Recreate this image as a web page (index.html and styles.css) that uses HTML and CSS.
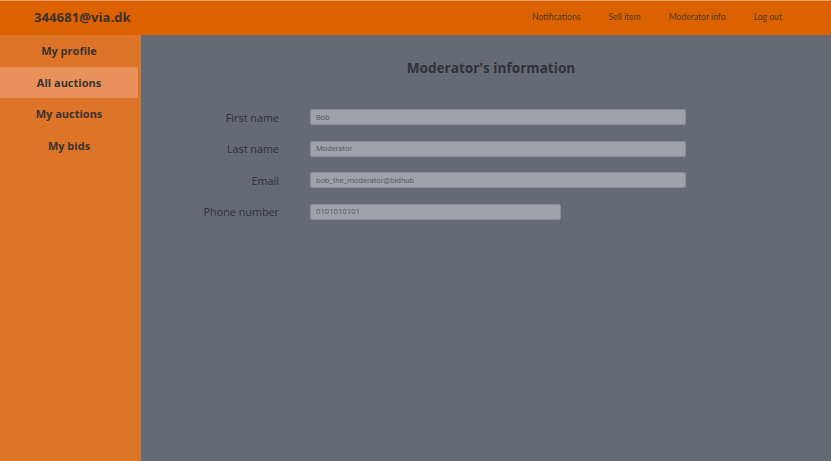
FILE: index.html
```html
<!DOCTYPE html>
<html>
<head>
<meta charset="utf-8">
<link rel="stylesheet" href="styles.css">
</head>
<body>
<header class="topbar">
  <div class="brand">344681@via.dk</div>
  <nav class="topnav">
    <a>Notifications</a>
    <a>Sell item</a>
    <a>Moderator info</a>
    <a>Log out</a>
  </nav>
</header>
<div class="layout">
  <aside class="sidebar">
    <a class="side-item">My profile</a>
    <a class="side-item active">All auctions</a>
    <a class="side-item">My auctions</a>
    <a class="side-item">My bids</a>
  </aside>
  <main class="content">
    <h1 class="title">Moderator's information</h1>
    <div class="form">
      <label>First name</label>
      <div class="field wide">Bob</div>
      <label>Last name</label>
      <div class="field wide">Moderator</div>
      <label>Email</label>
      <div class="field wide">bob_the_moderator@bidhub</div>
      <label>Phone number</label>
      <div class="field narrow">0101010101</div>
    </div>
  </main>
</div>
</body>
</html>
```
FILE: styles.css
```css
* { box-sizing: border-box; }
html, body { margin: 0; padding: 0; height: 100%; }
body {
  font-family: "Open Sans", "Noto Sans", sans-serif;
  background: #666a74;
  display: flex;
  flex-direction: column;
  overflow: hidden;
}
.topbar {
  height: 35px;
  background: #dc6200;
  border-top: 1px solid #e9a070;
  padding-bottom: 2px;
  display: flex;
  align-items: center;
  justify-content: space-between;
  flex-shrink: 0;
}
.brand {
  padding-left: 34px;
  font-size: 13px;
  font-weight: 700;
  color: #3a3230;
  letter-spacing: 0.1px;
}
.topnav {
  display: flex;
  padding-right: 49px;
  font-family: Lato, "Open Sans", sans-serif;
  font-size: 8.6px;
  color: #4e3a2c;
}
.topnav a { margin-left: 28px; }
.layout {
  flex: 1;
  display: flex;
}
.sidebar {
  width: 141px;
  background: #de7428;
  display: flex;
  flex-direction: column;
}
.side-item {
  height: 31.5px;
  margin-right: 3px;
  display: flex;
  align-items: center;
  justify-content: center;
  font-size: 11px;
  font-weight: 700;
  color: #3b3330;
  border-radius: 0 2px 2px 0;
}
.side-item.active { background: #e8915a; }
.content {
  flex: 1;
}
.title {
  margin: 23px 0 0 0;
  text-align: center;
  padding-left: 10px;
  font-size: 13.6px;
  font-weight: 700;
  color: #2f3137;
  line-height: 20px;
}
.form {
  margin-top: 31px;
  display: grid;
  grid-template-columns: 138px 376px;
  column-gap: 31px;
  row-gap: 15.5px;
  align-items: center;
}
.form label {
  text-align: right;
  font-size: 10.8px;
  color: #2f3138;
}
.field {
  height: 16px;
  background: #9ea2a8;
  border: 1px solid #8a8e95;
  border-radius: 2px;
  font-family: Roboto, "Noto Sans", sans-serif;
  font-size: 7.8px;
  color: #5a5e64;
  padding-left: 5px;
  display: flex;
  align-items: center;
}
.field.narrow { width: 251px; }
```
